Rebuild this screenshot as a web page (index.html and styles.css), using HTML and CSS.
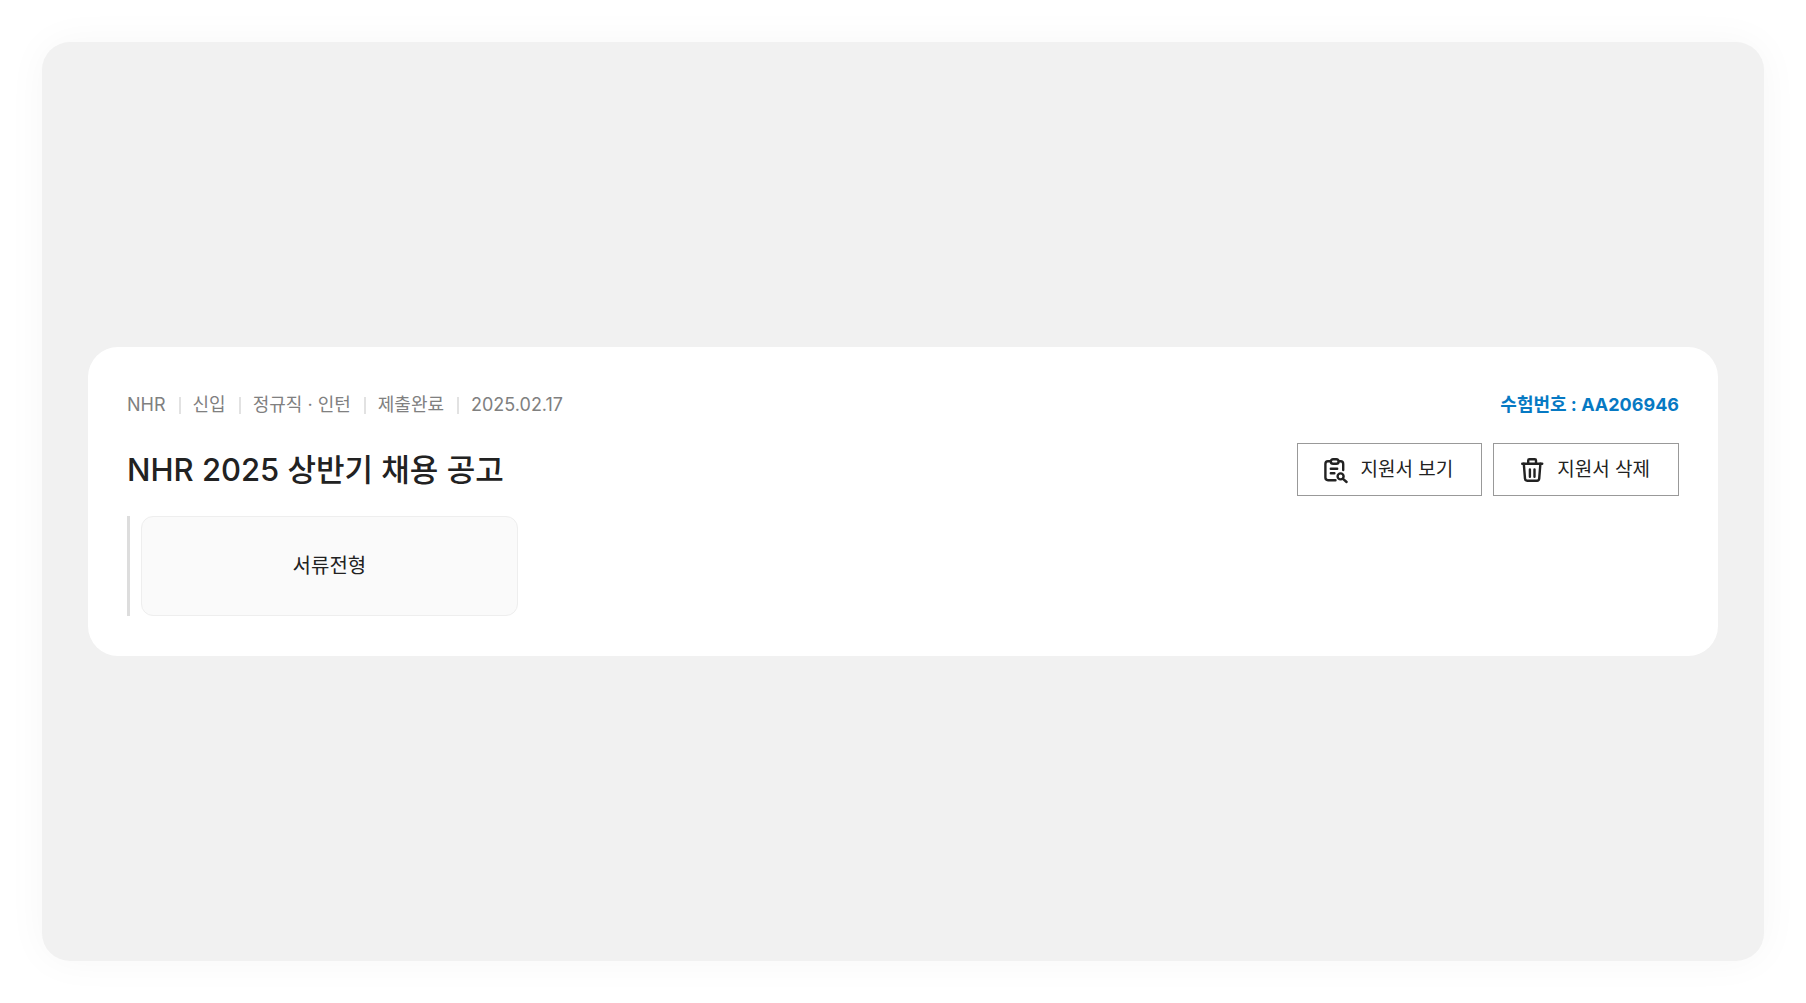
FILE: index.html
```html
<!DOCTYPE html>
<html lang="ko">
	<head>
		<meta charset="UTF-8" />
		<meta name="viewport" content="width=device-width, initial-scale=1.0" />
		<link rel="stylesheet" href="styles.css">
		<title>NHR 2025 상반기 채용 공고</title>
	</head>
	<body>
		<main class="panel">
			<article class="card">
				<div class="card-top">
					<ul class="meta">
						<li>NHR</li>
						<li>신입</li>
						<li>정규직 · 인턴</li>
						<li>제출완료</li>
						<li>2025.02.17</li>
					</ul>
					<p class="exam-number">수험번호 : AA206946</p>
				</div>

				<div class="card-title">
					<h1 class="title">NHR 2025 상반기 채용 공고</h1>
					<div class="actions">
						<button type="button" class="button">
							<svg class="icon" viewBox="0 0 28 28" aria-hidden="true">
								<path d="M9.5 5.3H7a2.6 2.6 0 0 0-2.6 2.6v13.7A2.6 2.6 0 0 0 7 24.2h7.5M18 5.3h1.6a2.6 2.6 0 0 1 2.6 2.6V14" />
								<rect x="9.8" y="3.2" width="7.8" height="4.6" rx="2.3" />
								<path d="M9.8 12.8h6.4M9.8 17.3h3.6" />
								<circle cx="19.6" cy="20.4" r="3" />
								<path d="M22 22.8l3.6 3.2" />
							</svg>
							<span>지원서 보기</span>
						</button>
						<button type="button" class="button">
							<svg class="icon" viewBox="0 0 28 28" aria-hidden="true">
								<path d="M5.2 7.7h20" />
								<path d="M11.2 7.7V4.4a1.2 1.2 0 0 1 1.2-1.2h5.4a1.2 1.2 0 0 1 1.2 1.2v3.3" />
								<path d="M6.8 7.7l1.2 15a2.2 2.2 0 0 0 2.2 2h9.8a2.2 2.2 0 0 0 2.2-2l1.2-15" />
								<path d="M12.9 13.4v7.4M17.5 13.4v7.4" />
							</svg>
							<span>지원서 삭제</span>
						</button>
					</div>
				</div>

				<ol class="steps">
					<li class="step">서류전형</li>
				</ol>
			</article>
		</main>
	</body>
</html>
```

FILE: styles.css
```css
* {
	padding: 0;
	margin: 0;
	box-sizing: border-box;
}

body {
	font-family: Inter, 'Noto Sans CJK KR', sans-serif;
	color: #222;
	background-color: #fff;
	padding: 42px;
}

ul,
ol {
	list-style: none;
}

.panel {
	display: flex;
	align-items: center;
	min-height: calc(100vh - 84px);
	padding: 46px;
	border-radius: 28px;
	background-color: #f1f1f1;
	box-shadow: 0 0 40px rgba(0, 0, 0, 0.04);
}

.card {
	flex: 1;
	display: flex;
	flex-direction: column;
	gap: 20px;
	padding: 40px 39px;
	border-radius: 30px;
	background-color: #fff;
}

.card-top,
.card-title {
	display: flex;
	justify-content: space-between;
	align-items: center;
}

.card-top {
	font-size: 18px;
	line-height: 36px;
}

.meta {
	display: flex;
	color: #808080;
}

.meta li {
	display: flex;
	align-items: center;
}

/* thin divider between items */
.meta li + li::before {
	content: '';
	width: 2px;
	height: 17px;
	margin: 0 12px 0 13px;
	background-color: #e2e2e2;
}

.exam-number {
	color: #0679c3;
	font-weight: 700;
}

.title {
	font-size: 31px;
	font-weight: 500;
	line-height: 40px;
}

.actions {
	display: flex;
	gap: 11px;
}

.button {
	display: flex;
	align-items: center;
	gap: 12px;
	height: 53px;
	padding: 0 28px 0 23px;
	border: 1px solid #999;
	background-color: #fff;
	color: #222;
	font-family: inherit;
	font-size: 19px;
	line-height: 26px;
	cursor: pointer;
}

.button:hover {
	background-color: #fafafa;
}

.icon {
	width: 28px;
	height: 28px;
	fill: none;
	stroke: #222;
	stroke-width: 2.4;
	stroke-linecap: round;
	stroke-linejoin: round;
}

.steps {
	display: flex;
	gap: 11px;
	padding-left: 11px;
	border-left: 3px solid #ddd;
}

.step {
	width: 24.5%;
	padding: 34px 20px;
	border: 1px solid #eee;
	border-radius: 12px;
	background-color: #fafafa;
	font-size: 20px;
	line-height: 30px;
	text-align: center;
}
```
